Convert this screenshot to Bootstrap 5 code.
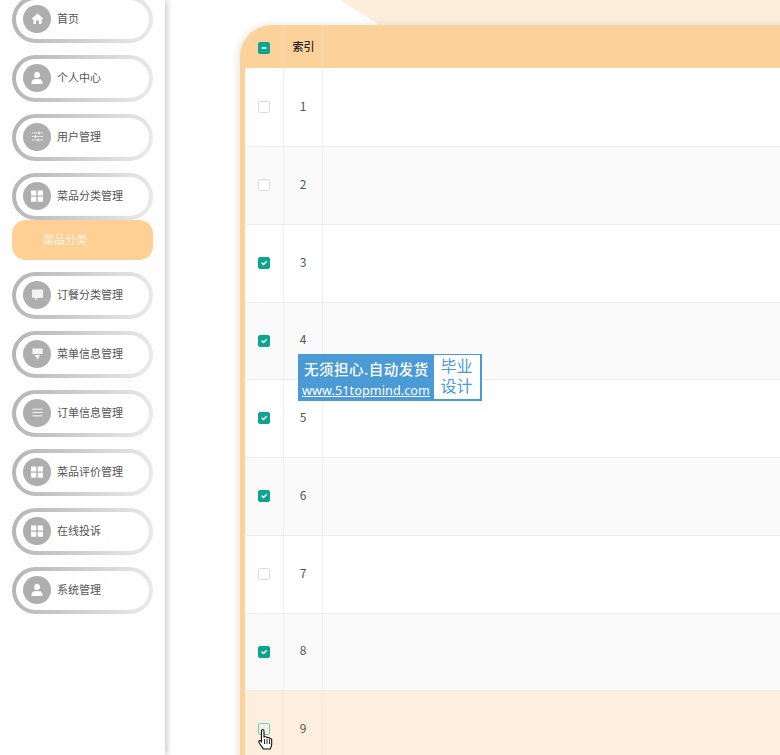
<!DOCTYPE html>
<html lang="zh">
<head>
<meta charset="utf-8">
<title>菜品分类</title>
<link href="https://cdn.jsdelivr.net/npm/bootstrap@5.3.0/dist/css/bootstrap.min.css" rel="stylesheet">
<style>
html,body{height:755px;overflow:hidden;background:#fff}
body{font-family:"Noto Sans CJK SC","Liberation Sans",sans-serif;color:#333;font-size:11px}
.app-shell{height:755px}
.side-rail{width:165px;flex:none;background:#fefefe;box-shadow:2px 0 6px rgba(0,0,0,.22);padding:0 12px;z-index:2;height:755px}
.side-list{margin-top:-4px;gap:12px}
.side-pill{height:47px;border:4px solid transparent;border-radius:24px;background:linear-gradient(#fff,#fff) padding-box,linear-gradient(100deg,#b4b4b4,#ebebeb) border-box;padding:0 0 2px 7px;gap:6px;color:#555;font-size:11px}
.side-dot{width:28px;height:28px;border-radius:50%;background:#aeaeae;flex:none}
.side-sub{height:40px;margin-top:-12px;background:#fed093;border-radius:14px;color:#fff7ec;padding:0 0 2px 31px;font-size:11px}
.main-pane{position:relative;min-width:0;padding:25px 0 0 75px}
.main-deco{position:absolute;left:175px;top:0;right:0;height:40px;background:#fdeedc;clip-path:polygon(0 0,100% 0,100% 100%,63px 100%)}
.data-wrap{position:relative;width:600px;background:#fff;border-left:5px solid #fdd29a;border-top-left-radius:32px;box-shadow:-2px 0 8px rgba(0,0,0,.1);overflow:hidden}
.data-table{table-layout:fixed;width:100%;margin:0;font-size:12px;color:#555}
.data-table th,.data-table td{padding:0;text-align:center;vertical-align:middle;border-right:1px solid #efefef;border-bottom:1px solid #ededed;background:transparent;box-shadow:none;color:inherit}
.data-table thead th{height:43px;background:#fdd29a;border-right-color:#fde1bb;border-bottom:0;font-weight:500;color:#222;font-size:11px}
.data-table thead th+th{padding-left:1px}
.data-table tbody td{height:77.75px;padding-bottom:3px}
.data-table tbody tr:first-child td{height:78.5px}
.data-table tbody tr:nth-child(even) td{background:#fafafa}
.data-table tbody tr.row-hover td{background:#fdeedd;border-right-color:#fbe9d5}
.col-check{width:38.5px}
.col-index{width:39px}
.data-table .form-check-input{width:12px;height:12px;margin:-1px 0 0;border:1px solid #dcdcdc;border-radius:2px;vertical-align:middle;display:inline-block;box-shadow:none}
.data-table .form-check-input:checked,.data-table .form-check-input:indeterminate{background-color:#0aa58c;border-color:#0aa58c}
.data-table .form-check-input.hover-box{border-color:#6fcdb8;background-color:#f4f1ea}
.promo-tag{position:absolute;left:298px;top:354px;width:184px;height:47px;background:#4a9ad6;color:#fff;z-index:3;padding:1px 2px 2px 0}
.promo-left{flex:1;min-width:0;padding-left:6px}
.promo-title{font-size:14.5px;line-height:27px;letter-spacing:.5px;font-weight:500;white-space:nowrap}
.promo-link{font-size:12.6px;line-height:17px;text-decoration:underline;font-family:"Noto Sans","Liberation Sans",sans-serif;white-space:nowrap;margin-left:-2px;letter-spacing:.1px}
.promo-box{width:46px;background:#fff;color:#4a9ad6;font-family:"Liberation Sans","Noto Sans CJK SC",sans-serif;font-size:16px;line-height:20px;text-align:center;flex:none;padding:2px 1px 0 0}
.hand-cursor{position:absolute;left:257px;top:728px;z-index:4;width:18px;height:23px}
</style>
</head>
<body>
<div class="app-shell d-flex">
  <nav class="side-rail">
    <div class="side-list d-flex flex-column">
      <div class="side-pill d-flex align-items-center"><span class="side-dot d-flex align-items-center justify-content-center"><svg width="13" height="13" viewBox="0 0 14 14"><path d="M7 1.500 13 7v.8h-1.600V13H8.600V9.200H5.400V13H2.600V7.800H1V7z" fill="#fff"/></svg></span><span>首页</span></div>
      <div class="side-pill d-flex align-items-center"><span class="side-dot d-flex align-items-center justify-content-center"><svg width="14" height="14" viewBox="0 0 14 14"><circle cx="7" cy="4" r="3" fill="#fff"/><path d="M1.500 13v-1.600C1.500 9.200 3.500 8 7 8s5.500 1.200 5.500 3.400V13z" fill="#fff"/></svg></span><span>个人中心</span></div>
      <div class="side-pill d-flex align-items-center"><span class="side-dot d-flex align-items-center justify-content-center"><svg width="13" height="13" viewBox="0 0 14 14" fill="#eee"><rect x="1" y="2.700" width="12" height=".9"/><rect x="1" y="6.500" width="12" height=".9"/><rect x="1" y="10.300" width="12" height=".9"/><rect x="8" y="1.700" width="1.500" height="3"/><rect x="4" y="5.400" width="1.500" height="3"/><rect x="7" y="9.200" width="1.500" height="3"/></svg></span><span>用户管理</span></div>
      <div class="side-pill d-flex align-items-center"><span class="side-dot d-flex align-items-center justify-content-center"><svg width="14" height="14" viewBox="0 0 14 14" fill="#fff"><rect x="1" y="1.500" width="5.300" height="5"/><rect x="7.700" y="1.500" width="5.300" height="5"/><rect x="1" y="7.700" width="5.300" height="5"/><rect x="7.700" y="7.700" width="5.300" height="5"/></svg></span><span>菜品分类管理</span></div>
      <div class="side-sub d-flex align-items-center">菜品分类</div>
      <div class="side-pill d-flex align-items-center"><span class="side-dot d-flex align-items-center justify-content-center"><svg width="13" height="13" viewBox="0 0 14 14"><path d="M2 1.500h10a1 1 0 0 1 1 1v7a1 1 0 0 1-1 1H7.500L4.500 13.200V10.500H2a1 1 0 0 1-1-1v-7a1 1 0 0 1 1-1z" fill="#f2f2f2"/></svg></span><span>订餐分类管理</span></div>
      <div class="side-pill d-flex align-items-center"><span class="side-dot d-flex align-items-center justify-content-center"><svg width="13" height="13" viewBox="0 0 14 14"><path d="M1.500 1.500h11v6h-11zM4 8.500h6l-1.300 2H8V13H6v-2.500h-.7z" fill="#f5f5f5"/></svg></span><span>菜单信息管理</span></div>
      <div class="side-pill d-flex align-items-center"><span class="side-dot d-flex align-items-center justify-content-center"><svg width="13" height="13" viewBox="0 0 14 14" fill="#eee"><rect x="1.500" y="2.800" width="11" height="1.200"/><rect x="1.500" y="6.400" width="11" height="1.200"/><rect x="1.500" y="10" width="11" height="1.200"/></svg></span><span>订单信息管理</span></div>
      <div class="side-pill d-flex align-items-center"><span class="side-dot d-flex align-items-center justify-content-center"><svg width="14" height="14" viewBox="0 0 14 14" fill="#fff"><rect x="1" y="1.500" width="5.300" height="5"/><rect x="7.700" y="1.500" width="5.300" height="5"/><rect x="1" y="7.700" width="5.300" height="5"/><rect x="7.700" y="7.700" width="5.300" height="5"/></svg></span><span>菜品评价管理</span></div>
      <div class="side-pill d-flex align-items-center"><span class="side-dot d-flex align-items-center justify-content-center"><svg width="14" height="14" viewBox="0 0 14 14" fill="#fff"><rect x="1" y="1.500" width="5.300" height="5"/><rect x="7.700" y="1.500" width="5.300" height="5"/><rect x="1" y="7.700" width="5.300" height="5"/><rect x="7.700" y="7.700" width="5.300" height="5"/></svg></span><span>在线投诉</span></div>
      <div class="side-pill d-flex align-items-center"><span class="side-dot d-flex align-items-center justify-content-center"><svg width="14" height="14" viewBox="0 0 14 14"><circle cx="7" cy="4" r="3" fill="#fff"/><path d="M1.500 13v-1.600C1.500 9.200 3.500 8 7 8s5.500 1.200 5.500 3.400V13z" fill="#fff"/></svg></span><span>系统管理</span></div>
    </div>
  </nav>
  <main class="main-pane flex-grow-1">
    <div class="main-deco"></div>
    <div class="data-wrap">
      <table class="table data-table">
        <colgroup><col class="col-check"><col class="col-index"><col></colgroup>
        <thead><tr><th><input class="form-check-input" type="checkbox" id="check-all" aria-label="全选"></th><th>索引</th><th></th></tr></thead>
        <tbody>
          <tr><td><input class="form-check-input" type="checkbox" aria-label="选择"></td><td>1</td><td></td></tr>
          <tr><td><input class="form-check-input" type="checkbox" aria-label="选择"></td><td>2</td><td></td></tr>
          <tr><td><input class="form-check-input" type="checkbox" checked aria-label="选择"></td><td>3</td><td></td></tr>
          <tr><td><input class="form-check-input" type="checkbox" checked aria-label="选择"></td><td>4</td><td></td></tr>
          <tr><td><input class="form-check-input" type="checkbox" checked aria-label="选择"></td><td>5</td><td></td></tr>
          <tr><td><input class="form-check-input" type="checkbox" checked aria-label="选择"></td><td>6</td><td></td></tr>
          <tr><td><input class="form-check-input" type="checkbox" aria-label="选择"></td><td>7</td><td></td></tr>
          <tr><td><input class="form-check-input" type="checkbox" checked aria-label="选择"></td><td>8</td><td></td></tr>
          <tr class="row-hover"><td><input class="form-check-input hover-box" type="checkbox" aria-label="选择"></td><td>9</td><td></td></tr>
        </tbody>
      </table>
    </div>
  </main>
</div>
<div class="promo-tag d-flex">
  <div class="promo-left"><div class="promo-title">无须担心.自动发货</div><div class="promo-link">www.51topmind.com</div></div>
  <div class="promo-box">毕业<br>设计</div>
</div>
<svg class="hand-cursor" viewBox="0 0 18 23"><path d="M5.500 1.500c1 0 1.500.7 1.500 1.600V9l1-.3c.8-.1 1.300.2 1.500.7.800-.3 1.500-.1 1.800.5.800-.2 1.500 0 1.800.7.900-.1 1.600.4 1.600 1.400v4c0 2.300-.8 3.500-1.500 5H6.500c-.8-1.500-3-4-4.300-6-.7-1-.5-1.800.2-2.200.7-.4 1.400 0 2 .8V3.100c0-1 .6-1.600 1.600-1.600z" fill="#fff" stroke="#111" stroke-width="1.100"/><path d="M7.500 11v5M10 11v5M12.500 11.500V16" stroke="#111" stroke-width=".9"/></svg>
<script>document.getElementById('check-all').indeterminate=true;</script>
<script src="https://cdn.jsdelivr.net/npm/bootstrap@5.3.0/dist/js/bootstrap.bundle.min.js"></script>
</body>
</html>
